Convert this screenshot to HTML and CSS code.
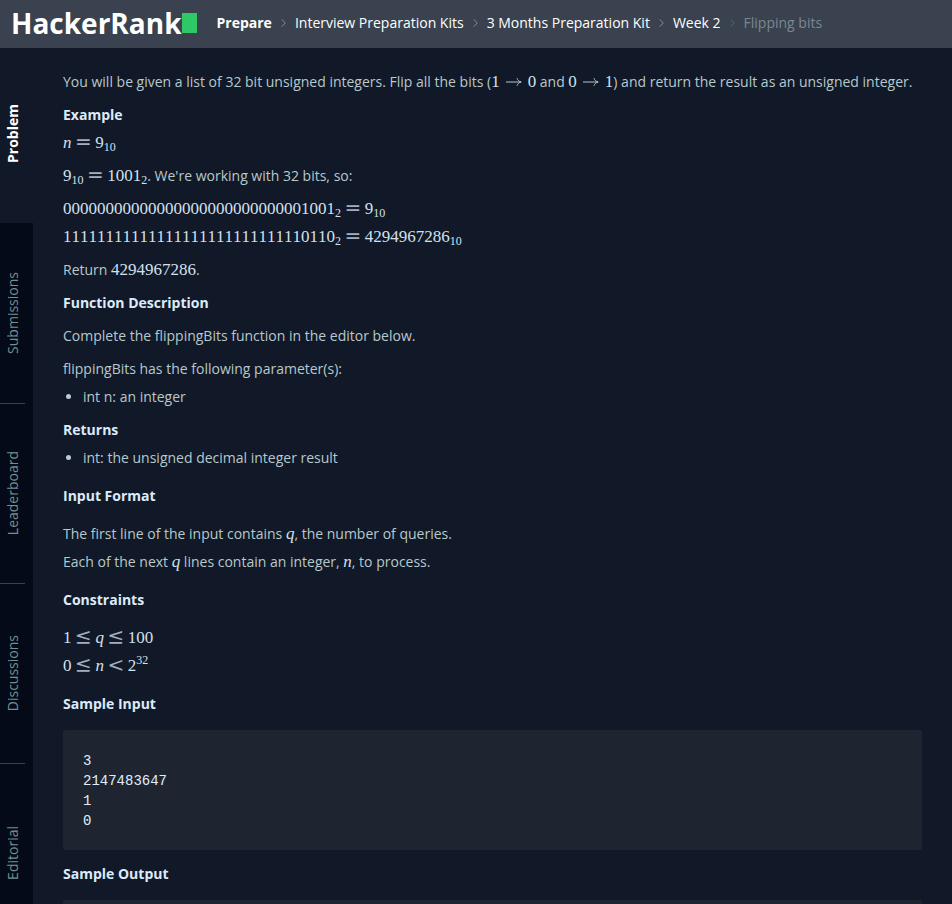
FILE: index.html
```html
<!DOCTYPE html>
<html lang="en">
<head>
<meta charset="utf-8">
<meta name="viewport" content="width=device-width, initial-scale=1">
<title>Flipping bits | HackerRank</title>
<link rel="stylesheet" href="styles.css">
</head>
<body>
<header class="topbar">
  <a class="logo" href="#">HackerRank<span class="logo-block"></span></a>
  <nav class="crumbs" aria-label="Breadcrumb">
    <a class="crumb crumb-root" href="#">Prepare</a>
    <svg class="chevron" viewBox="0 0 6 10" aria-hidden="true"><path d="M.7.7 5.2 5 .7 9.3"/></svg>
    <a class="crumb" href="#">Interview Preparation Kits</a>
    <svg class="chevron" viewBox="0 0 6 10" aria-hidden="true"><path d="M.7.7 5.2 5 .7 9.3"/></svg>
    <a class="crumb" href="#">3 Months Preparation Kit</a>
    <svg class="chevron" viewBox="0 0 6 10" aria-hidden="true"><path d="M.7.7 5.2 5 .7 9.3"/></svg>
    <a class="crumb" href="#">Week 2</a>
    <svg class="chevron chevron-dim" viewBox="0 0 6 10" aria-hidden="true"><path d="M.7.7 5.2 5 .7 9.3"/></svg>
    <span class="crumb crumb-current">Flipping bits</span>
  </nav>
</header>
<div class="layout">
  <nav class="tabs" aria-label="Challenge">
    <a class="tab tab-active" href="#"><span class="tab-label">Problem</span></a>
    <a class="tab" href="#"><span class="tab-label">Submissions</span></a>
    <a class="tab" href="#"><span class="tab-label">Leaderboard</span></a>
    <a class="tab" href="#"><span class="tab-label">Discussions</span></a>
    <a class="tab" href="#"><span class="tab-label">Editorial</span></a>
  </nav>
  <main class="statement">
    <section class="block">
      <p>You will be given a list of 32 bit unsigned integers. Flip all the bits (<span class="math">1<svg class="arrow" viewBox="0 0 16 10" aria-label="to"><path d="M0 5H15M11 1.2C11.6 3.2 13 4.5 15.2 5 13 5.5 11.6 6.8 11 8.8"/></svg>0</span> and <span class="math">0<svg class="arrow" viewBox="0 0 16 10" aria-label="to"><path d="M0 5H15M11 1.2C11.6 3.2 13 4.5 15.2 5 13 5.5 11.6 6.8 11 8.8"/></svg>1</span>) and return the result as an unsigned integer.</p>
      <p><strong>Example</strong><br><span class="math"><i>n</i><span class="op">=</span>9<sub>10</sub></span></p>
      <p><span class="math">9<sub>10</sub><span class="op">=</span>1001<sub>2</sub></span>. We're working with 32 bits, so:</p>
      <p><span class="math">00000000000000000000000000001001<sub>2</sub><span class="op">=</span>9<sub>10</sub></span><br><span class="math">11111111111111111111111111110110<sub>2</sub><span class="op">=</span>4294967286<sub>10</sub></span></p>
      <p>Return <span class="math">4294967286</span>.</p>
      <p><strong>Function Description</strong></p>
      <p>Complete the flippingBits function in the editor below.</p>
      <p class="tight">flippingBits has the following parameter(s):</p>
      <ul><li>int n: an integer</li></ul>
      <p class="tight"><strong>Returns</strong></p>
      <ul><li>int: the unsigned decimal integer result</li></ul>
    </section>
    <section class="block">
      <h2>Input Format</h2>
      <p class="tight">The first line of the input contains <i class="math">q</i>, the number of queries.<br>Each of the next <i class="math">q</i> lines contain an integer, <i class="math">n</i>, to process.</p>
    </section>
    <section class="block">
      <h2>Constraints</h2>
      <p class="tight"><span class="math">1<span class="op">≤</span><i>q</i><span class="op">≤</span>100</span><br><span class="math">0<span class="op">≤</span><i>n</i><span class="op">&lt;</span>2<sup>32</sup></span></p>
    </section>
    <section class="block">
      <h2>Sample Input</h2>
      <pre>3
2147483647
1
0</pre>
    </section>
    <section class="block">
      <h2>Sample Output</h2>
      <pre></pre>
    </section>
  </main>
</div>
</body>
</html>
```
FILE: styles.css
```css
* { box-sizing: border-box; }

body {
  margin: 0;
  height: 100vh;
  overflow: hidden;
  display: flex;
  flex-direction: column;
  background: #111827;
  color: #b7c9cc;
  font-family: "Open Sans", "Noto Sans", sans-serif;
  font-size: 14px;
  line-height: 28px;
}

a { color: inherit; text-decoration: none; }

.topbar {
  flex: none;
  display: flex;
  align-items: flex-start;
  height: 48px;
  padding: 0 11px;
  background: #39424e;
  color: #fff;
  white-space: nowrap;
}

.logo {
  display: flex;
  align-items: center;
  margin-right: 20px;
  font-size: 28px;
  font-weight: 700;
  line-height: 46px;
  height: 46px;
}

.logo-block { width: 15px; height: 20px; background: #2ec866; }

.crumbs { display: flex; align-items: center; gap: 9px; height: 46px; }
.crumb { font-weight: 500; }
.crumb-root { font-weight: 700; }
.crumb-current { font-weight: 400; color: #7b8794; }

.chevron {
  width: 5px;
  height: 10px;
  fill: none;
  stroke: #8a939f;
  stroke-width: 1.1;
}
.chevron-dim { stroke: #576871; }

.layout { flex: 1; min-height: 0; display: flex; }

.tabs { flex: none; width: 33px; background: #040a18; }

.tab {
  position: relative;
  display: flex;
  align-items: center;
  height: 180px;
  padding-right: 8px;
  color: #738f93;
}
.tab:not(.tab-active):not(:last-child)::after {
  content: "";
  position: absolute;
  left: 0;
  right: 8px;
  bottom: -1px;
  height: 1px;
  background: #39424e;
}
.tab-active {
  height: 175px;
  padding-bottom: 5px;
  background: #111827;
  color: #fff;
  font-weight: 700;
}
.tab-label { writing-mode: vertical-rl; transform: rotate(180deg); line-height: 26px; }

.statement { flex: 1; min-width: 0; padding: 20px 30px 0; }

.block { margin-bottom: 10px; }

p, h2, ul, pre { margin: 0; }
p { margin-bottom: 5px; }
.tight { margin-bottom: 0; }
strong, h2 { color: #dceafa; font-size: 14px; font-weight: 700; line-height: 28px; }
h2 { margin-bottom: 10px; }

ul { padding-left: 20px; margin-bottom: 5px; list-style: none; }
ul:last-child { margin-bottom: 0; }
li { position: relative; }
li::before {
  content: "";
  position: absolute;
  left: -17px;
  top: 11px;
  width: 5px;
  height: 5px;
  border-radius: 50%;
  background: #c0c9d8;
}

.math {
  color: #d4e0ee;
  font-family: "Liberation Serif", serif;
  font-size: 17px;
  font-kerning: none;
  line-height: 20px;
}
.math sub, .math sup { font-size: 12px; line-height: 0; }
.math sub { vertical-align: -3px; }
.math sup { vertical-align: 7px; }
.op {
  margin: 0 4px;
  color: #a3afbe;
  font-family: "DejaVu Math TeX Gyre", "DejaVu Serif", serif;
  font-size: 20px;
  line-height: 0;
}

.arrow {
  width: 16px;
  height: 10px;
  margin: 0 6px;
  fill: none;
  stroke: #b8c4d0;
  stroke-width: 1;
}

pre {
  min-height: 60px;
  padding: 21px 20px 19px;
  margin-top: 12px;
  border-radius: 2px;
  background: #1e2531;
  color: #e0edfa;
  font-family: "Liberation Mono", monospace;
  font-size: 14px;
  line-height: 20px;
}
```
